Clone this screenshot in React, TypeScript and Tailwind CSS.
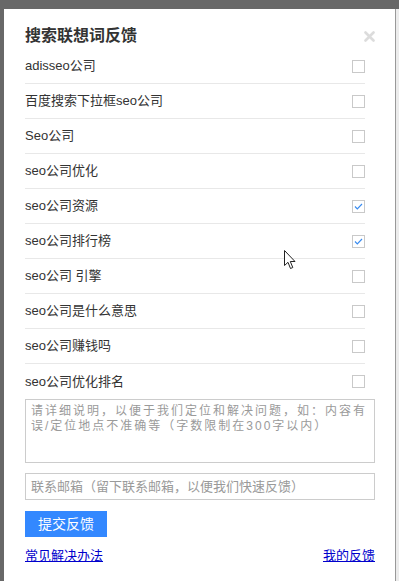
import React from "react";

const rows: { label: string; checked: boolean }[] = [
  { label: "adisseo公司", checked: false },
  { label: "百度搜索下拉框seo公司", checked: false },
  { label: "Seo公司", checked: false },
  { label: "seo公司优化", checked: false },
  { label: "seo公司资源", checked: true },
  { label: "seo公司排行榜", checked: true },
  { label: "seo公司 引擎", checked: false },
  { label: "seo公司是什么意思", checked: false },
  { label: "seo公司赚钱吗", checked: false },
  { label: "seo公司优化排名", checked: false },
];

const font = { fontFamily: "'Liberation Sans', 'Noto Sans CJK SC', sans-serif" };

function Box({ checked }: { checked: boolean }) {
  return (
    <div className="w-[13px] h-[13px] border border-[#c9c9c9] bg-white flex items-center justify-center">
      {checked && (
        <svg width="9" height="7" viewBox="0 0 9 7">
          <path d="M1 3.5 L3.3 5.8 L8 1" fill="none" stroke="#3a8cf0" strokeWidth="1.2" />
        </svg>
      )}
    </div>
  );
}

export default function App() {
  return (
    <div className="relative w-[399px] h-[581px] bg-[#686868] pt-[9px] pl-[4px] flex overflow-hidden" style={font}>
      <div className="w-[391px] h-full bg-white pl-[21px] pr-[20px] flex flex-col">
        <div className="h-[40px] pt-[16px] flex justify-between items-start">
          <div className="text-[16px] leading-[22px] font-bold text-[#333]">搜索联想词反馈</div>
          <svg className="mt-[6px]" width="11" height="11" viewBox="0 0 11 11">
            <path d="M1.5 1.5 L9.5 9.5 M9.5 1.5 L1.5 9.5" stroke="#dcdcdc" strokeWidth="2.6" strokeLinecap="round" />
          </svg>
        </div>
        <div className="w-[340px] flex flex-col">
          {rows.map((r, i) => (
            <div
              key={i}
              className={`h-[35px] flex items-center justify-between ${i < rows.length - 1 ? "border-b border-[#e8e8e8]" : ""}`}
            >
              <span className="text-[13px] text-[#333] leading-[18px]">{r.label}</span>
              <Box checked={r.checked} />
            </div>
          ))}
        </div>
        <div className="mt-[0px] w-[350px] h-[64px] border border-[#cccccc] px-[5px] pt-[4px]">
          <div className="text-[12px] leading-[15px] tracking-[2px] text-[#9a9a9a]">
            请详细说明，以便于我们定位和解决问题，如：内容有误/定位地点不准确等（字数限制在300字以内）
          </div>
        </div>
        <div className="mt-[10px] w-[350px] h-[27px] border border-[#cccccc] px-[5px] flex items-center">
          <span className="text-[13px] text-[#9a9a9a]">联系邮箱（留下联系邮箱，以便我们快速反馈）</span>
        </div>
        <div className="mt-[11px] w-[82px] h-[26px] bg-[#3388ff] text-white text-[14px] flex items-center justify-center">
          提交反馈
        </div>
        <div className="mt-[10px] w-[350px] flex justify-between text-[13px] leading-[18px] text-[#0000cc]">
          <span className="underline">常见解决办法</span>
          <span className="underline">我的反馈</span>
        </div>
      </div>
      <div className="w-[1px] h-full bg-[#999]" />
      <div className="flex-1 h-full bg-[#ececec]" />
      <svg className="absolute left-[284px] top-[250px]" width="13" height="20" viewBox="0 0 13 20">
        <path d="M0.5 0.5 L0.5 15.5 L4 12.3 L6.5 18.5 L8.8 17.5 L6.3 11.5 L11 11.5 Z" fill="white" stroke="#222" strokeWidth="1" />
      </svg>
    </div>
  );
}
